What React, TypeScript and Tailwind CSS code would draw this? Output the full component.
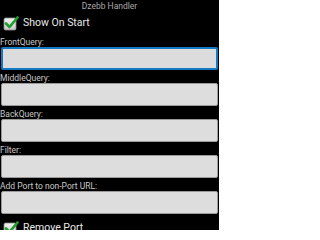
import React from 'react';

const CheckIcon = () => (
  <svg width="16" height="16" viewBox="0 0 16 16" className="shrink-0">
    <defs>
      <linearGradient id="cbg" x1="0" y1="0" x2="0" y2="1">
        <stop offset="0" stopColor="#f4f4f4" />
        <stop offset="1" stopColor="#c8c8c8" />
      </linearGradient>
    </defs>
    <rect x="1" y="3" width="12" height="12" rx="1.5" fill="url(#cbg)" stroke="#8a8a8a" strokeWidth="0.8" />
    <path d="M3 8.5 L6.5 12 L14.5 2.5" fill="none" stroke="#1f9e2c" strokeWidth="2.6" strokeLinecap="round" strokeLinejoin="round" />
  </svg>
);

const CheckRow = ({ label }: { label: string }) => (
  <div className="shrink-0 flex items-center gap-[4px] pl-[3px] h-[22px]">
    <CheckIcon />
    <span className="text-[10.5px] text-[#e8e8e8] leading-none">{label}</span>
  </div>
);

const Field = ({ label, focused }: { label: string; focused?: boolean }) => (
  <div className="shrink-0 flex flex-col">
    <div className="h-[13px] flex items-end pb-[1px] text-[8.5px] leading-none text-[#c8c8c8]">{label}</div>
    <div
      className={
        focused
          ? 'mx-[1px] h-[23px] rounded-[2px] border-2 border-[#1479c0] bg-[#dcdcdc]'
          : 'mx-[1px] h-[23px] rounded-[2px] border border-[#9a9a9a] bg-[#dddddd]'
      }
    />
  </div>
);

export default function App() {
  return (
    <div className="w-[219px] h-[230px] overflow-hidden bg-black flex flex-col" style={{ fontFamily: 'Roboto, "Noto Sans", sans-serif' }}>
      <div className="shrink-0 h-[12px] flex items-center justify-center text-[8.5px] leading-none text-[#a8a8a8]">Dzebb Handler</div>
      <CheckRow label="Show On Start" />
      <Field label="FrontQuery:" focused />
      <Field label="MiddleQuery:" />
      <Field label="BackQuery:" />
      <Field label="Filter:" />
      <Field label="Add Port to non-Port URL:" />
      <div className="shrink-0 mt-[3px]">
        <CheckRow label="Remove Port" />
      </div>
    </div>
  );
}
